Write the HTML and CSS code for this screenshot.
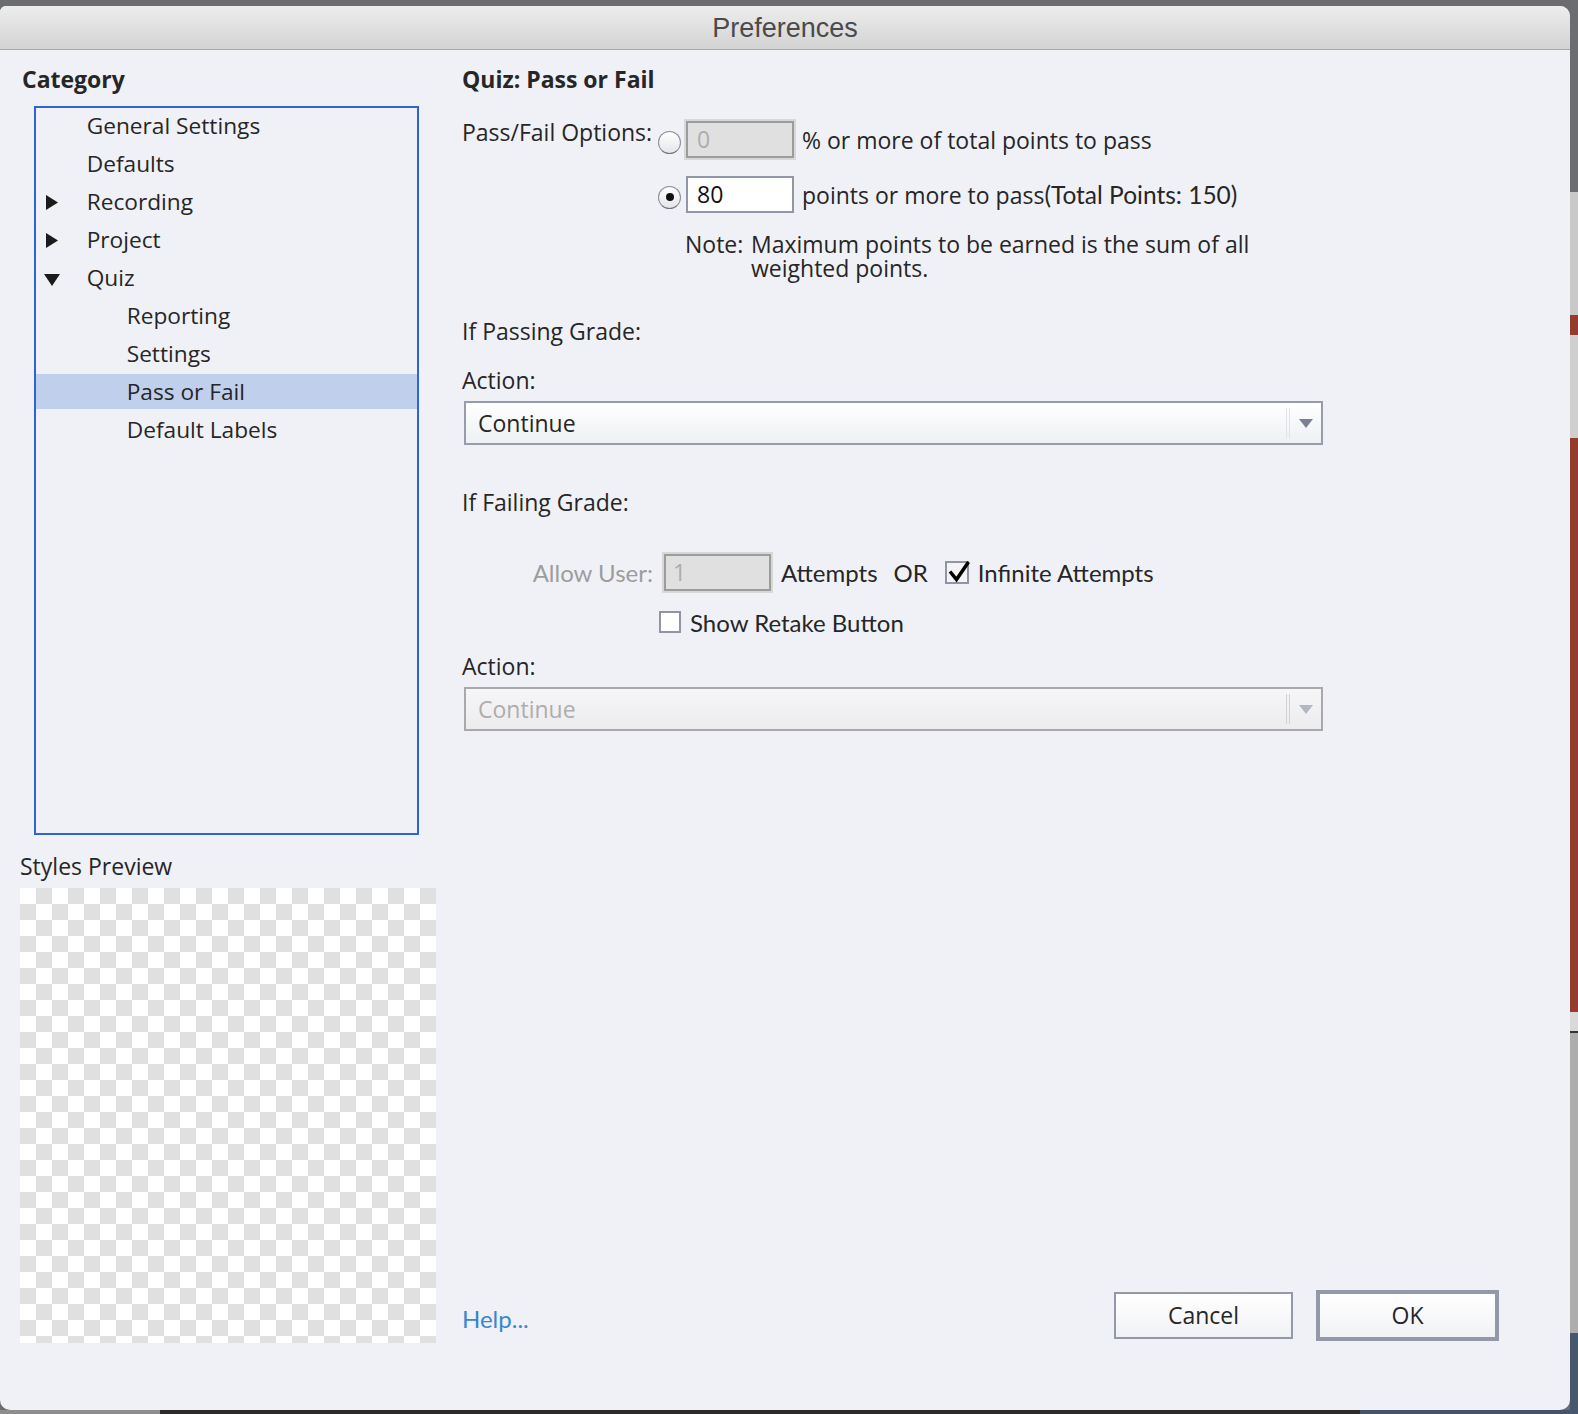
FILE: index.html
```html
<!doctype html>
<html lang="en">
<head>
  <meta charset="UTF-8">
  <title>Preferences</title>
  <link rel="stylesheet" href="styles.css">
</head>
<body>
  <div class="dialog">
    <div class="titlebar">Preferences</div>
    <div class="content">
      <div class="left">
        <div class="heading category">Category</div>
        <div class="tree">
          <div class="row"><span class="twisty"></span>General Settings</div>
          <div class="row"><span class="twisty"></span>Defaults</div>
          <div class="row">
            <svg class="twisty" viewBox="0 0 16 16"><polygon points="2,0 14,7.5 2,15"/></svg>Recording
          </div>
          <div class="row">
            <svg class="twisty" viewBox="0 0 16 16"><polygon points="2,0 14,7.5 2,15"/></svg>Project
          </div>
          <div class="row">
            <svg class="twisty" viewBox="0 0 16 16"><polygon points="0,3 16,3 8,15"/></svg>Quiz
          </div>
          <div class="row sub"><span class="twisty"></span>Reporting</div>
          <div class="row sub"><span class="twisty"></span>Settings</div>
          <div class="row sub selected"><span class="twisty"></span>Pass or Fail</div>
          <div class="row sub"><span class="twisty"></span>Default Labels</div>
        </div>
        <div class="preview-label">Styles Preview</div>
        <div class="checker"></div>
      </div>

      <div class="right">
        <div class="heading">Quiz: Pass or Fail</div>

        <div class="opt-row first">
          <div class="opt-label">Pass/Fail Options:</div>
          <span class="radio"></span>
          <span class="field disabled">0</span>
          <span class="after">% or more of total points to pass</span>
        </div>
        <div class="opt-row second">
          <div class="opt-label"></div>
          <span class="radio checked"></span>
          <span class="field">80</span>
          <span class="after">points or more to pass<span class="alt">(Total Points: 150)</span></span>
        </div>

        <div class="note">
          <span class="note-key">Note:</span>
          <div>
            <div class="note-line">Maximum points to be earned is the sum of all</div>
            <div class="note-line">weighted points.</div>
          </div>
        </div>

        <div class="section pass-grade">If Passing Grade:</div>
        <div class="section action">Action:</div>
        <div class="select">
          <span class="select-text">Continue</span>
          <span class="sep"></span>
          <svg class="arrow" viewBox="0 0 14 9"><polygon points="0,0 14,0 7,9"/></svg>
        </div>

        <div class="section fail-grade">If Failing Grade:</div>
        <div class="attempts">
          <span class="allow">Allow User:</span>
          <span class="field disabled small">1</span>
          <span class="alt attempts-word">Attempts</span>
          <span class="alt or">OR</span>
          <span class="check on">
            <svg viewBox="2 2 20 19"><path d="M5 10.5 L11.5 18.5 L23.5 1"/></svg>
          </span>
          <span class="alt check-label">Infinite Attempts</span>
        </div>
        <div class="retake">
          <span class="check"></span>
          <span class="alt check-label">Show Retake Button</span>
        </div>

        <div class="section action2">Action:</div>
        <div class="select off">
          <span class="select-text">Continue</span>
          <span class="sep"></span>
          <svg class="arrow" viewBox="0 0 14 9"><polygon points="0,0 14,0 7,9"/></svg>
        </div>

        <div class="footer">
          <span class="help">Help...</span>
          <span class="button">Cancel</span>
          <span class="button default">OK</span>
        </div>
      </div>
    </div>
  </div>
</body>
</html>
```

FILE: styles.css
```css
html, body {
    margin: 0;
    height: 1414px;
    overflow: hidden;
}
body {
    padding-top: 6px;
    box-sizing: border-box;
    font-family: "Open Sans", "DejaVu Sans", sans-serif;
    font-size: 23px;
    color: #262626;
    background:
        linear-gradient(to bottom, #6c6d71 0 192px, #c9c9c9 192px 315px, #943c2b 315px 335px,
            #cfcfcf 335px 438px, #943c2b 438px 1012px, #d9d9d9 1012px 1031px, #333 1031px 1033px,
            #adadad 1033px 1333px, #46576e 1333px) right top / 8px 100% no-repeat,
        linear-gradient(to right, #8e8e8e 0 160px, #2d2a27 160px 1360px, #44546b 1360px) left bottom / 100% 4px no-repeat,
        #6b6c70;
}
.dialog {
    width: 1570px;
    height: 1404px;
    background: #f0f1f6;
    border-radius: 6px 10px 10px 10px;
    overflow: hidden;
    display: flex;
    flex-direction: column;
}
.titlebar {
    height: 43px;
    line-height: 44px;
    border-bottom: 1px solid #a9a9a9;
    background: linear-gradient(#ededed, #d3d3d3);
    text-align: center;
    font-family: "Liberation Sans", Arial, sans-serif;
    font-size: 27px;
    color: #4a4a4a;
}
.content {
    flex: 1;
    display: flex;
}
.heading, .section, .preview-label {
    line-height: 30px;
}
.heading {
    font-weight: bold;
}

/* left column */
.left {
    width: 422px;
    padding: 14px 0 0 20px;
}
.category {
    margin-left: 2px;
}
.tree {
    margin: 12px 0 0 14px;
    width: 381px;
    height: 725px;
    border: 2px solid #3064d4;
    font-size: 22.7px;
}
.row {
    display: flex;
    height: 35px;
    line-height: 35px;
    margin-bottom: 3px;
    padding-left: 8px;
    white-space: nowrap;
}
.row.sub {
    padding-left: 48px;
}
.row.selected {
    background: #c0cfeb;
}
.twisty {
    flex: none;
    width: 16px;
    height: 16px;
    margin: 11px 26.7px 0 0;
    fill: #1b1b1b;
}
.preview-label {
    margin-top: 15.5px;
}
.checker {
    margin-top: 7.5px;
    width: 416px;
    height: 455px;
    background: repeating-conic-gradient(#e0e0e0 0 25%, #fff 0 50%) 0 0 / 32px 32px;
}

/* right column */
.right {
    flex: 1;
    display: flex;
    flex-direction: column;
    padding: 14px 71px 69px 20px;
}
.opt-row {
    display: flex;
    align-items: center;
    height: 37px;
}
.opt-row.first {
    margin-top: 27px;
}
.opt-row.second {
    margin-top: 18px;
}
.opt-label {
    flex: none;
    width: 196px;
    align-self: flex-start;
    line-height: 30px;
    margin-top: -4.5px;
    white-space: nowrap;
}
.radio {
    flex: none;
    box-sizing: border-box;
    width: 23px;
    height: 23px;
    margin-top: 5px;
    border-radius: 50%;
    border: 1px solid #8b8d96;
    border-bottom-color: #72747e;
    background: linear-gradient(#ffffff, #e4e5ea);
    display: flex;
    align-items: center;
    justify-content: center;
}
.radio.checked:after {
    content: "";
    width: 8px;
    height: 8px;
    border-radius: 50%;
    background: #111;
}
.field {
    flex: none;
    box-sizing: border-box;
    width: 108px;
    height: 37px;
    line-height: 33px;
    margin-left: 5px;
    padding-left: 9px;
    border: 2px solid #9297a8;
    background: #fff;
    color: #111;
}
.field.disabled {
    border-color: #9c9c9c;
    background: #e0e0e0;
    color: #adadad;
    box-shadow: 0 0 0 2px #d8d8d8;
}
.after {
    margin-left: 8px;
    white-space: nowrap;
}
.alt {
    font-family: Lato, "Liberation Sans", sans-serif;
    font-size: 24px;
}
.after .alt {
    font-size: 24.5px;
}
.note {
    display: flex;
    margin: 18.5px 0 0 223px;
}
.note-key {
    width: 66px;
    flex: none;
    line-height: 24px;
}
.note-line {
    height: 24px;
    line-height: 24px;
    white-space: nowrap;
}
.pass-grade {
    margin-top: 36px;
}
.action {
    margin-top: 19px;
}
.select {
    display: flex;
    align-items: center;
    box-sizing: border-box;
    width: 859px;
    height: 44px;
    margin: 6.5px 0 0 2px;
    padding: 0 8px 0 12px;
    border: 2px solid #979cab;
    background: linear-gradient(#ffffff, #eef0f4);
}
.select-text {
    flex: 1;
}
.sep {
    width: 2px;
    height: 30px;
    border-left: 1px solid #e1e3e9;
    border-right: 1px solid #e1e3e9;
    margin-right: 9px;
}
.arrow {
    width: 14px;
    height: 9px;
    fill: #7b8194;
}
.select.off {
    border-color: #a9a9a9;
    background: linear-gradient(#f6f6f8, #ececef);
    color: #adadad;
}
.select.off .sep {
    border-color: #d2d2d4;
}
.select.off .arrow {
    fill: #b3b7c3;
}
.fail-grade {
    margin-top: 41.5px;
}
.attempts {
    display: flex;
    align-items: center;
    height: 37px;
    margin-top: 37.5px;
    white-space: nowrap;
}
.allow {
    width: 191px;
    flex: none;
    text-align: right;
    font-family: Lato, "Liberation Sans", sans-serif;
    font-size: 24px;
    color: #9d9d9d;
}
.field.small {
    width: 107px;
    margin-left: 11px;
    padding-left: 7px;
}
.attempts-word {
    margin-left: 10px;
}
.or {
    margin-left: 16px;
}
.check {
    flex: none;
    box-sizing: border-box;
    width: 22px;
    height: 22px;
    border: 2px solid #9095a5;
    background: #fff;
}
.check.on {
    width: 24px;
    height: 23px;
    margin-left: 17px;
    background: #f4f4f7;
}
.check svg {
    display: block;
    width: 20px;
    height: 19px;
    overflow: visible;
}
.check path {
    fill: none;
    stroke: #000;
    stroke-width: 3.5;
}
.check-label {
    margin-left: 9px;
}
.retake {
    display: flex;
    align-items: center;
    height: 29px;
    margin: 16.5px 0 0 197px;
}
.action2 {
    margin-top: 14px;
}
.footer {
    margin-top: auto;
    display: flex;
    align-items: center;
}
.help {
    flex: 1;
    margin-top: 6px;
    font-family: Lato, "Liberation Sans", sans-serif;
    font-size: 24px;
    color: #3a86cf;
}
.button {
    box-sizing: border-box;
    width: 179px;
    height: 47px;
    line-height: 43px;
    text-align: center;
    border: 2px solid #9499a9;
    background: linear-gradient(#ffffff, #f1f2f6);
}
.button.default {
    width: 183px;
    height: 51px;
    line-height: 43px;
    margin-left: 23px;
    border-width: 4px;
}
```
